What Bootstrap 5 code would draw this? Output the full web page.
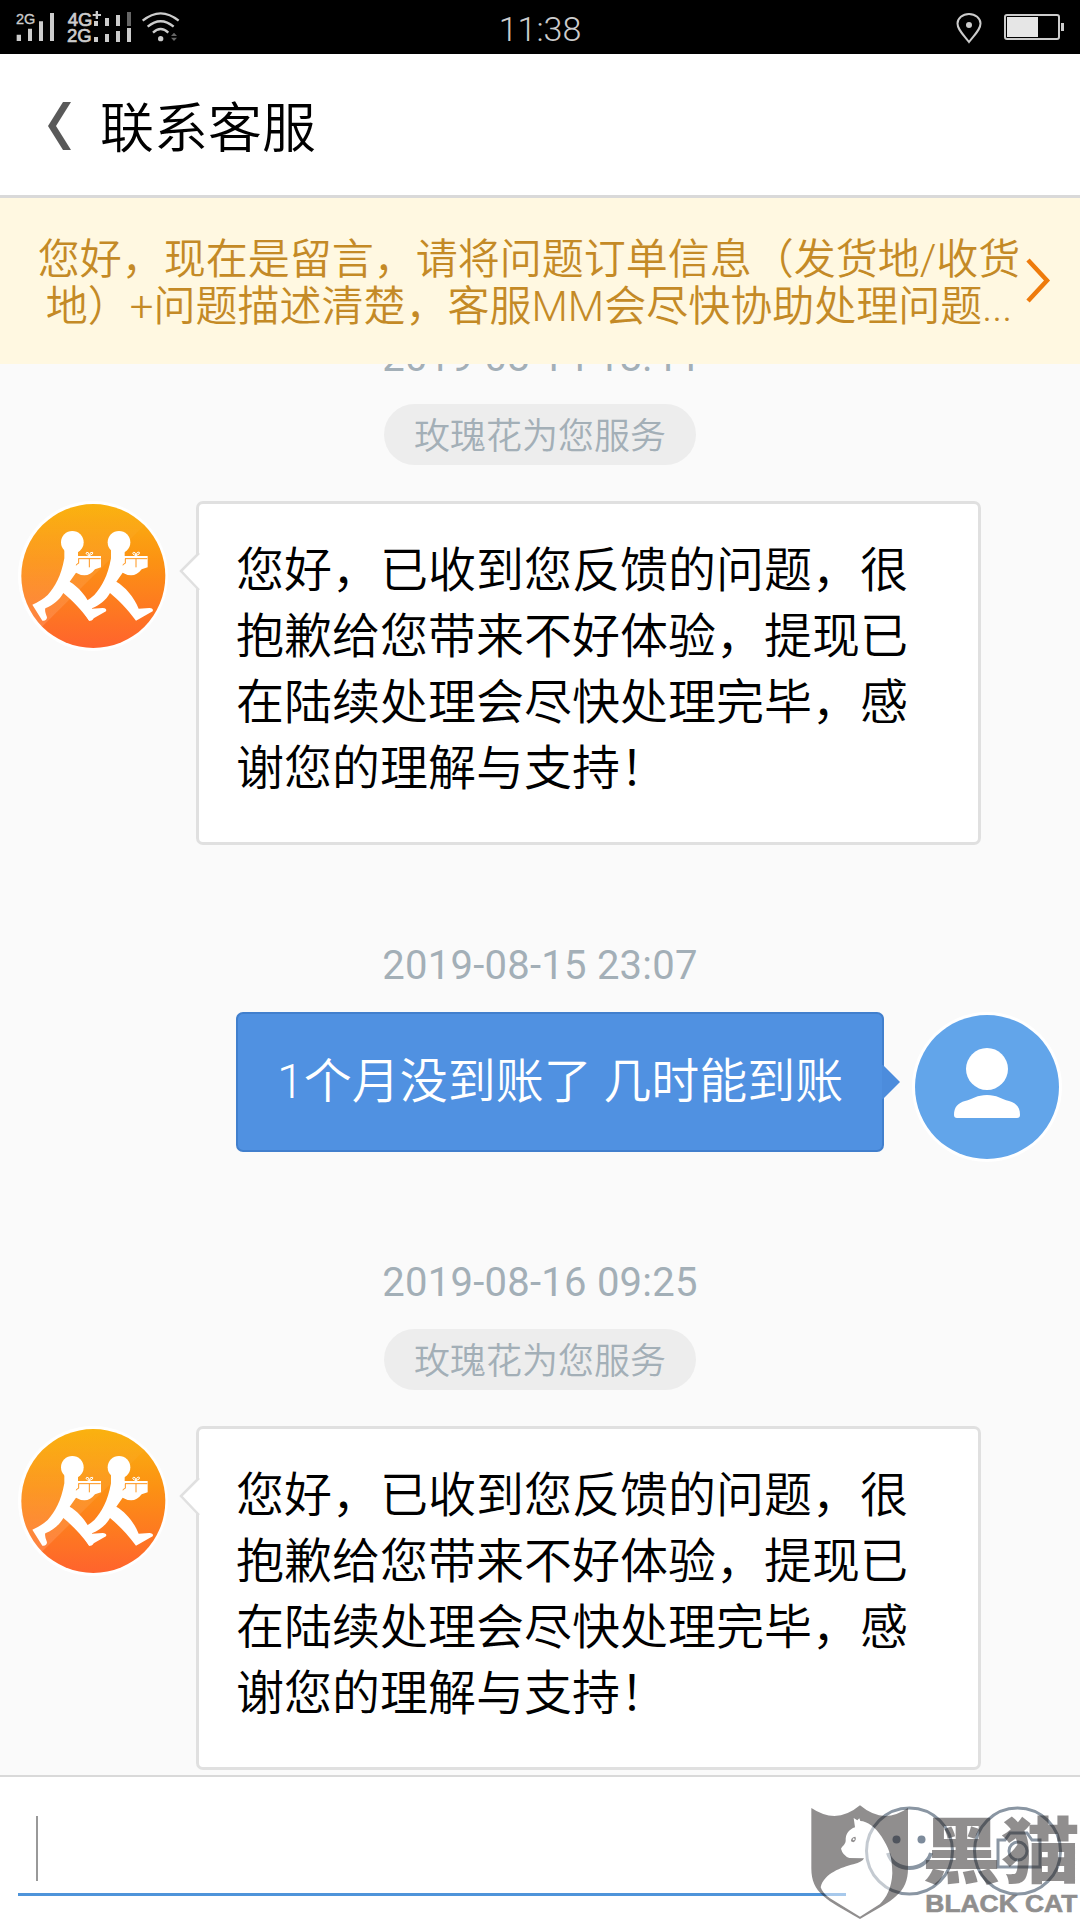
<!DOCTYPE html>
<html lang="zh-CN">
<head>
    <meta charset="UTF-8">
    <meta name="viewport" content="width=device-width, initial-scale=1.0">
    <title>联系客服</title>
    <link href="https://cdn.jsdelivr.net/npm/bootstrap@5.3.3/dist/css/bootstrap.min.css" rel="stylesheet">
    <script src="https://cdn.jsdelivr.net/npm/bootstrap@5.3.3/dist/js/bootstrap.bundle.min.js"></script>
    <style>
        body {
            font-family: Roboto, "Noto Sans CJK SC", sans-serif;
            font-weight: 350;
            background-color: #fafafa;
            color: #000;
        }
        .screen {
            width: 1080px;
            height: 1920px;
        }
        .status-bar {
            height: 54px;
            background-color: #000;
            color: #ccc;
        }
        .status-left {
            width: 465px;
        }
        .clock {
            width: 150px;
            font-size: 34px;
            line-height: 59px;
        }
        .title-bar {
            height: 144px;
            border-bottom: 3px solid #d9d9d9;
            padding-left: 48px;
        }
        .back-icon {
            margin-top: 3px;
        }
        .page-title {
            font-size: 54px;
            line-height: 80px;
            font-weight: 350;
            margin: 10px 0 0 28px;
        }
        .notice {
            height: 166px;
            background-color: #fff8e1;
            color: #c48a26;
            font-size: 42px;
            line-height: 47px;
            padding-left: 37px;
        }
        .notice-text {
            width: 984px;
            margin-top: 4px;
        }
        .chat {
            height: 1411px;
        }
        .time {
            height: 60px;
            font-size: 40px;
            font-weight: 400;
            letter-spacing: .25px;
            line-height: 62px;
            color: #a3afb7;
        }
        .chat .time:first-child {
            margin-top: -37px;
        }
        .time-next {
            margin-top: 90px;
        }
        .served-by {
            width: 312px;
            height: 61px;
            margin: 17px auto 36px;
            background-color: #ededed;
            color: #a3afb7;
            font-size: 36px;
            line-height: 67px;
        }
        .msg {
            padding: 0 18px;
        }
        .msg-out {
            padding-top: 17px;
        }
        .avatar {
            width: 150px;
            height: 150px;
        }
        .bubble {
            position: relative;
            font-size: 48px;
            line-height: 66px;
            border-radius: 7px;
        }
        .bubble-in {
            width: 785px;
            height: 344px;
            margin-left: 28px;
            padding: 34px 38px 0 37px;
            background-color: #fff;
            border: 3px solid #e0e0e0;
        }
        .bubble-out {
            width: 648px;
            height: 140px;
            margin-right: 28px;
            padding: 35px 0 0 39px;
            background-color: #5091e1;
            border: 2px solid #417fcd;
            color: #fff;
        }
        .tail {
            position: absolute;
        }
        .tail-in {
            left: -20px;
            top: 47px;
        }
        .tail-out {
            right: -18px;
            top: 50px;
        }
        .input-bar {
            position: relative;
            height: 145px;
            background-color: #fff;
            border-top: 2px solid #d9d9d9;
            padding-left: 18px;
        }
        .text-field {
            width: 828px;
            height: 119px;
            border-bottom: 3px solid #4e94da;
            padding: 39px 0 0 18px;
        }
        .caret {
            width: 2px;
            height: 65px;
            background-color: #999;
        }
        .watermark {
            position: absolute;
            right: 0;
            bottom: 0;
            opacity: .5;
        }
    </style>
</head>
<body>
    <svg width="0" height="0" class="position-absolute">
        <defs>
            <linearGradient id="sunset" x1="0" y1="0" x2="0" y2="1">
                <stop offset="0" stop-color="#fab20f"/>
                <stop offset=".4" stop-color="#fc9213"/>
                <stop offset="1" stop-color="#ff632d"/>
            </linearGradient>
            <linearGradient id="shine" x1="0" y1="0" x2="0" y2="1">
                <stop offset="0" stop-color="#fff" stop-opacity="0"/>
                <stop offset="1" stop-color="#fff" stop-opacity=".16"/>
            </linearGradient>
            <clipPath id="sheen"><path d="M0 0H570L0 565Z"/></clipPath>
            <g id="runner">
                <circle cx="217" cy="187" r="34" fill="#fff"/>
                <path fill="#fff" d="M193 205V235C183 290 165 320 143 345Q125 362 97 374L127 422Q140 424 141 412Q133 392 136 385C160 375 178 360 190 339C215 360 240 385 268 422L318 394Q322 385 308 384L276 386C262 350 235 320 209 305L228 278Q262 298 285 268L303 262V228H234V205Z"/>
                <path fill="none" stroke="#ff951b" stroke-width="3" d="M235 236H302M268 236V262M236 236V250Q228 252 229 256"/>
                <path fill="none" stroke="#fff" stroke-width="3" d="M268 227Q254 222 260 217Q266 214 268 227Q270 214 278 217Q282 222 268 227"/>
            </g>
            <g id="service-avatar">
                <circle cx="279" cy="288" r="225" fill="#fff"/>
                <circle cx="280" cy="288" r="216" fill="url(#sunset)"/>
                <circle cx="280" cy="288" r="216" fill="url(#shine)" clip-path="url(#sheen)"/>
                <use href="#runner"/>
                <use href="#runner" x="140"/>
            </g>
        </defs>
    </svg>

    <div class="screen d-flex flex-column overflow-hidden">
        <div class="status-bar d-flex flex-shrink-0">
            <div class="status-left">
                <svg width="200" height="54" viewBox="0 0 600 162" fill="#ccc" font-family="Liberation Sans">
                    <text x="48" y="72" font-size="45" textLength="58" lengthAdjust="spacingAndGlyphs" stroke="#ccc">2G</text>
                    <path d="M50 104h13v19H50zM84 86h12v37H84zM117 64h12v59h-12zM150 39h12v84h-12z"/>
                    <text x="203" y="77" font-size="55" textLength="74" lengthAdjust="spacingAndGlyphs" stroke="#ccc" stroke-width="2">4G</text>
                    <text x="201" y="125" font-size="55" textLength="74" lengthAdjust="spacingAndGlyphs" stroke="#ccc" stroke-width="2">2G</text>
                    <path d="M287 33h7v9h9v6h-9v9h-7v-9h-9v-6h9z"/>
                    <path d="M282 63h12v15h-12zM315 54h12v24h-12zM348 45h12v33h-12zM282 111h12v15h-12zM315 102h12v24h-12zM348 93h12v33h-12zM381 84h12v42h-12z"/>
                    <path fill="#666" d="M381 36h12v42h-12zM522 98l9 10h-18zM522 123l9-10h-18z"/>
                    <circle cx="482" cy="116" r="8"/>
                    <path fill="none" stroke="#ccc" stroke-width="7" d="M428 62Q482 18 536 62M443 80Q482 47 521 80M459 98Q482 76 505 98"/>
                </svg>
            </div>
            <div class="clock text-center">11:38</div>
            <svg class="ms-auto" width="140" height="54" viewBox="940 0 140 54">
                <path d="M969 42C962 33 957.500 29 957.500 23.500A11.500 9.500 0 0 1 980.500 23.500C980.500 29 976 33 969 42Z" fill="none" stroke="#ccc" stroke-width="2"/>
                <circle cx="969" cy="25" r="3" fill="#ccc"/>
                <rect x="1005" y="15" width="54" height="24" rx="2" fill="none" stroke="#ccc" stroke-width="2"/>
                <path d="M1007 17h31v20h-31z" fill="#e6e6e6"/>
                <path d="M1061 23h3v8h-3z" fill="#ccc"/>
            </svg>
        </div>

        <div class="title-bar d-flex align-items-center flex-shrink-0 bg-white">
            <svg class="back-icon" width="24" height="48" viewBox="0 0 24 48"><path d="M15 0H23L8 24L23 48H15L0 24Z" fill="#595959"/></svg>
            <h1 class="page-title">联系客服</h1>
        </div>

        <div class="notice d-flex align-items-center flex-shrink-0">
            <div class="notice-text text-center text-nowrap">您好，现在是留言，请将问题订单信息（发货地/收货<br>地）+问题描述清楚，客服MM会尽快协助处理问题...</div>
            <svg width="30" height="46" viewBox="0 0 30 46"><path d="M7 2L26 22.500L7 43" fill="none" stroke="#ee7b0c" stroke-width="4.500"/></svg>
        </div>

        <div class="chat d-flex flex-column flex-shrink-0 overflow-hidden">
            <div class="time flex-shrink-0 text-center">2019-08-14 18:44</div>
            <div class="served-by flex-shrink-0 rounded-pill text-center">玫瑰花为您服务</div>
            <div class="msg d-flex flex-shrink-0">
                <svg class="avatar" viewBox="54 63 450 450"><use href="#service-avatar"/></svg>
                <div class="bubble bubble-in">
                    您好，已收到您反馈的问题，很抱歉给您带来不好体验，提现已在陆续处理会尽快处理完毕，感谢您的理解与支持！
                    <svg class="tail tail-in" width="22" height="42"><path d="M20 2L2 20L20 39" fill="#fff" stroke="#e0e0e0" stroke-width="2.500"/></svg>
                </div>
            </div>

            <div class="time time-next flex-shrink-0 text-center">2019-08-15 23:07</div>
            <div class="msg msg-out d-flex flex-shrink-0 justify-content-end align-items-start">
                <div class="bubble bubble-out text-nowrap">
                    1个月没到账了 几时能到账
                    <svg class="tail tail-out" width="18" height="36"><path d="M0 1H1L18 18L1 35H0Z" fill="#4c8cdc"/></svg>
                </div>
                <svg class="avatar" viewBox="0 0 150 150">
                    <circle cx="75" cy="75" r="75" fill="#fff"/>
                    <circle cx="75" cy="75" r="72" fill="#62a5ea"/>
                    <circle cx="75" cy="57" r="21" fill="#fff"/>
                    <path d="M42 103C42 95 46 91 53 89C61 87 65 83 75 83S89 87 97 89C104 91 108 95 108 103Q108 106 105 106H45Q42 106 42 103Z" fill="#fff"/>
                </svg>
            </div>

            <div class="time time-next flex-shrink-0 text-center">2019-08-16 09:25</div>
            <div class="served-by flex-shrink-0 rounded-pill text-center">玫瑰花为您服务</div>
            <div class="msg d-flex flex-shrink-0">
                <svg class="avatar" viewBox="54 63 450 450"><use href="#service-avatar"/></svg>
                <div class="bubble bubble-in">
                    您好，已收到您反馈的问题，很抱歉给您带来不好体验，提现已在陆续处理会尽快处理完毕，感谢您的理解与支持！
                    <svg class="tail tail-in" width="22" height="42"><path d="M20 2L2 20L20 39" fill="#fff" stroke="#e0e0e0" stroke-width="2.500"/></svg>
                </div>
            </div>
        </div>

        <div class="input-bar d-flex flex-shrink-0">
            <div class="text-field"><div class="caret"></div></div>
            <svg class="ms-3 mt-4" width="210" height="100" viewBox="862 1801 210 100" fill="none" stroke="#8a96a3" stroke-width="3">
                <circle cx="909.500" cy="1851" r="43"/>
                <path d="M888 1853C894 1873 925 1873 931 1853" stroke-width="4"/>
                <circle cx="896.500" cy="1839.500" r="4" fill="#7d8b9b" stroke="none"/>
                <circle cx="921.500" cy="1839.500" r="4" fill="#7d8b9b" stroke="none"/>
                <circle cx="1017.500" cy="1851" r="43"/>
                <path d="M998 1840H1005L1010 1833H1027L1032 1840H1040V1867H998Z"/>
                <circle cx="1018" cy="1851" r="9"/>
            </svg>
            <!-- brand stamp over the buttons -->
            <svg class="watermark" width="300" height="145" viewBox="0 45 900 435" fill="#231f20">
                <path d="M94 144Q170 195 240 136Q310 195 384 144V325C384 400 340 420 240 477C140 420 94 400 94 325Z"/>
                <path fill="#fff" d="M221 174L232 181L238 175L241 183C262 184 285 200 305 230C325 262 337 285 337 340C335 385 318 415 300 432L240 470L150 415Q128 400 122 382C132 340 185 322 220 313Q248 306 252 295L208 294Q188 286 183 266C187 258 196 254 197 243C196 220 208 208 225 202Z"/>
                <path d="M213 244Q212 232 226 230Q231 240 220 247Z"/>
                <circle cx="221" cy="238" r="3" fill="#fff"/>
                <text x="426" y="352" font-family="Noto Sans CJK SC" font-weight="900" font-size="215" textLength="474" lengthAdjust="spacingAndGlyphs">黑猫</text>
                <text x="436" y="457" font-family="Liberation Sans" font-weight="700" font-size="69" textLength="456" lengthAdjust="spacingAndGlyphs" stroke="#231f20" stroke-width="2">BLACK CAT</text>
            </svg>
        </div>
    </div>
</body>
</html>
